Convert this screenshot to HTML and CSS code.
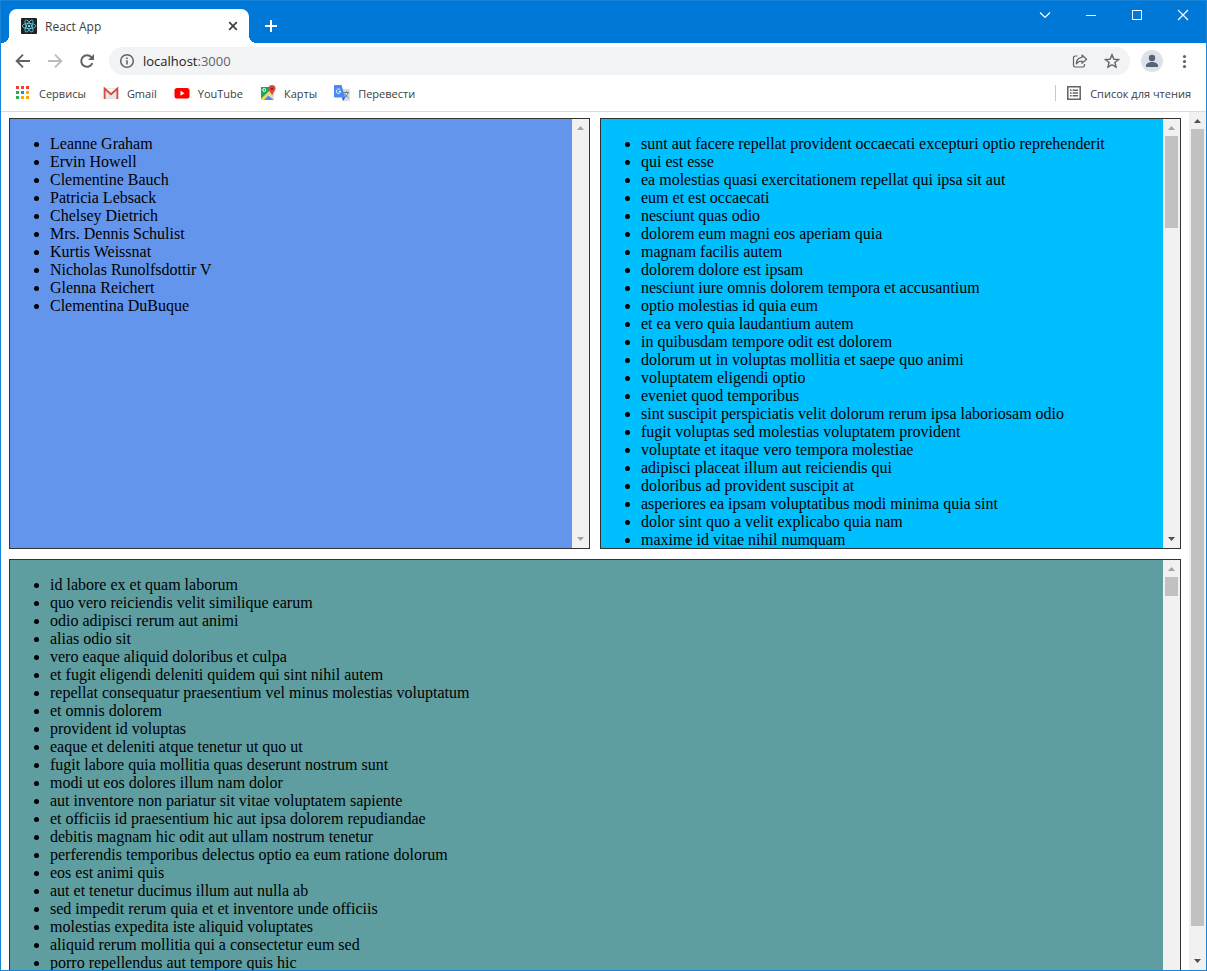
FILE: index.html
```html
<!DOCTYPE html>
<html lang="ru">
<head>
<meta charset="utf-8">
<meta name="viewport" content="width=device-width, initial-scale=1">
<title>React App</title>
<link rel="stylesheet" href="styles.css">
</head>
<body>
<div class="window">
  <header class="titlebar">
    <div class="tab">
      <svg class="icon" width="16" height="16" viewBox="0 0 16 16" aria-hidden="true"><rect width="16" height="16" rx="1" fill="#222"/><g fill="none" stroke="#61dafb" stroke-width=".75"><ellipse cx="8" cy="8" rx="6.7" ry="2.6"/><ellipse cx="8" cy="8" rx="6.7" ry="2.6" transform="rotate(60 8 8)"/><ellipse cx="8" cy="8" rx="6.7" ry="2.6" transform="rotate(120 8 8)"/></g><circle cx="8" cy="8" r="1.3" fill="#61dafb"/></svg>
      <span class="tab-title">React App</span>
      <button class="plain tab-close" aria-label="Закрыть вкладку"><svg class="icon" width="16" height="16" viewBox="0 0 16 16"><path d="M4.2 4.2l7.6 7.6M11.8 4.2l-7.6 7.6" stroke="#3c4043" stroke-width="1.7"/></svg></button>
    </div>
    <button class="plain new-tab" aria-label="Новая вкладка"><svg class="icon" width="16" height="16" viewBox="0 0 16 16"><path d="M8 2v12M2 8h12" stroke="#fff" stroke-width="2"/></svg></button>
    <div class="window-controls">
      <button class="plain control" aria-label="Поиск вкладок"><svg class="icon" width="12" height="12" viewBox="0 0 12 12"><path d="M1 3.5l5 5 5-5" fill="none" stroke="#fff" stroke-width="1.2"/></svg></button>
      <button class="plain control" aria-label="Свернуть"><svg class="icon" width="12" height="12" viewBox="0 0 12 12"><path d="M1 6.5h10" stroke="#fff"/></svg></button>
      <button class="plain control" aria-label="Развернуть"><svg class="icon" width="12" height="12" viewBox="0 0 12 12"><path d="M1.5 1.5h9v9h-9z" fill="none" stroke="#fff"/></svg></button>
      <button class="plain control" aria-label="Закрыть"><svg class="icon" width="12" height="12" viewBox="0 0 12 12"><path d="M1 1l10 10M11 1L1 11" stroke="#fff" stroke-width="1.2"/></svg></button>
    </div>
  </header>

  <div class="toolbar">
    <button class="plain nav" aria-label="Назад"><svg class="icon" width="16" height="16" viewBox="0 0 16 16"><path d="M15 8H2M8 1.7L1.7 8 8 14.3" fill="none" stroke="#5f6368" stroke-width="1.9"/></svg></button>
    <button class="plain nav" aria-label="Вперёд" disabled><svg class="icon" width="16" height="16" viewBox="0 0 16 16"><path d="M1 8h13M8 1.7L14.3 8 8 14.3" fill="none" stroke="#babcbe" stroke-width="1.9"/></svg></button>
    <button class="plain nav" aria-label="Обновить"><svg class="icon" width="16" height="16" viewBox="0 0 16 16"><path d="M13.4 10.2A5.8 5.8 0 1 1 12.4 4.2" fill="none" stroke="#5f6368" stroke-width="2"/><path d="M15 1v6H9z" fill="#5f6368"/></svg></button>
    <div class="omnibox">
      <svg class="icon" width="16" height="16" viewBox="0 0 16 16" aria-hidden="true"><circle cx="8" cy="8" r="6.3" fill="none" stroke="#5f6368" stroke-width="1.5"/><path d="M7.2 7.2h1.6v4.2H7.2zM7.2 4.5h1.6v1.6H7.2z" fill="#5f6368"/></svg>
      <div class="address" role="textbox" tabindex="0" aria-label="Адресная строка">localhost<span class="port">:3000</span></div>
      <button class="plain nav" aria-label="Поделиться"><svg class="icon" width="16" height="16" viewBox="0 0 16 16"><g fill="none" stroke="#5f6368" stroke-width="1.2" stroke-linejoin="round"><path d="M5.5 3H3.2a1.7 1.7 0 0 0-1.7 1.7v7.6A1.7 1.7 0 0 0 3.2 14h7.6a1.7 1.7 0 0 0 1.7-1.7V11"/><path d="M10 2l4.6 4.2L10 10.3V8C7.3 8 5.7 8.8 4.3 10.8 4.5 7.5 6.3 4.800 10 4.4z"/></g></svg></button>
      <button class="plain nav" aria-label="Добавить в закладки"><svg class="icon" width="16" height="16" viewBox="0 0 16 16"><path d="M8 1.8l1.8 4.300 4.700.4-3.600 3 1.100 4.600L8 11.700l-4 2.400 1.100-4.600-3.600-3 4.700-.4z" fill="none" stroke="#5f6368" stroke-width="1.4"/></svg></button>
    </div>
    <button class="plain profile" aria-label="Профиль"><svg class="icon" width="22" height="22" viewBox="0 0 22 22"><circle cx="11" cy="11" r="11" fill="#dee1e6"/><circle cx="11" cy="8" r="3.2" fill="#56627a"/><path d="M5 17v-1.5c0-2.300 3.500-3.500 6-3.500s6 1.200 6 3.500V17z" fill="#56627a"/></svg></button>
    <button class="plain menu" aria-label="Меню"><svg class="icon" width="16" height="16" viewBox="0 0 16 16"><g fill="#5f6368"><circle cx="8.5" cy="3.5" r="1.6"/><circle cx="8.5" cy="8.5" r="1.6"/><circle cx="8.5" cy="13.5" r="1.6"/></g></svg></button>
  </div>

  <nav class="bookmarks">
    <a class="bookmark" href="#apps"><svg class="icon" width="16" height="16" viewBox="0 0 16 16"><path d="M1 1h3v3H1zM6 1h3v3H6zM11 1h3v3h-3z" fill="#ea4335"/><path d="M1 6h3v3H1zM1 11h3v3H1z" fill="#34a853"/><path d="M6 6h3v3H6z" fill="#1a8cff"/><path d="M11 6h3v3h-3zM6 11h3v3H6zM11 11h3v3h-3z" fill="#fbab00"/></svg>Сервисы</a>
    <a class="bookmark" href="#gmail"><svg class="icon" width="16" height="16" viewBox="0 0 16 16"><path d="M1 3h14v11H1z" fill="#e6e6e6"/><path d="M3 4h10L8 9z" fill="#fafafa"/><path d="M1.600 14V3.600L8 9.200l6.400-5.600V14" fill="none" stroke="#d54b3d" stroke-width="1.8"/></svg>Gmail</a>
    <a class="bookmark" href="#youtube"><svg class="icon" width="16" height="16" viewBox="0 0 16 16"><rect x="0.500" y="3" width="15" height="10.500" rx="2.600" fill="#f00"/><path d="M6.500 5.800v5l4-2.500z" fill="#fff"/></svg>YouTube</a>
    <a class="bookmark" href="#maps"><svg class="icon" width="16" height="16" viewBox="0 0 16 16"><rect x="1" y="2" width="13" height="13" rx="1" fill="#e9e9e9"/><path d="M1 2h9v4L1 14z" fill="#1fa463"/><path d="M3 15l5-5 6 5z" fill="#4a89f3"/><path d="M1 14L10 5l2 2-8 8H2z" fill="#ffd24a"/><path d="M8 10l6 5V9z" fill="#ddd"/><circle cx="4.200" cy="5" r="1.500" fill="none" stroke="#fff"/><path d="M12 0a3.600 3.600 0 0 1 3.600 3.700c0 2.300-2.800 3.500-3.500 7.300-.8-3.800-3.700-5-3.700-7.300A3.600 3.600 0 0 1 12 0z" fill="#e14b3e"/><circle cx="12" cy="3.800" r="1.300" fill="#7b251d"/></svg>Карты</a>
    <a class="bookmark" href="#translate"><svg class="icon" width="16" height="16" viewBox="0 0 16 16"><path d="M6 4h9a1 1 0 0 1 1 1v10a1 1 0 0 1-1 1H9z" fill="#dadce0"/><path d="M9.500 7.500H15M12.300 6v1.500M14 7.500c-.5 2.500-2 4-3.500 5M10.800 8.500c.8 2 2 3.500 3.700 4.500" fill="none" stroke="#62838c" stroke-width="1"/><path d="M1 0h6.500l3.800 12.500H1a1 1 0 0 1-1-1V1a1 1 0 0 1 1-1z" fill="#4a89f3"/><path d="M8 12.500h3.300L9 16z" fill="#3050bd"/><path d="M6.300 4.900A2.200 2.200 0 1 0 6.700 6.500H4.600" fill="none" stroke="#fff" stroke-width="1"/></svg>Перевести</a>
    <button class="plain reading-list"><svg class="icon" width="16" height="16" viewBox="0 0 16 16"><path d="M1.800 1.800h12.400v12.400H1.800z" fill="none" stroke="#5f6368" stroke-width="1.500"/><path d="M4 5.200h1.600M4 8h1.600M4 10.800h1.600M6.600 5.200H12M6.600 8H12M6.600 10.800H12" stroke="#5f6368" stroke-width="1.500"/></svg>Список для чтения</button>
  </nav>

  <div class="viewport">
    <main class="board">
      <section class="panel users">
        <ul class="list">
          <li>Leanne Graham</li>
          <li>Ervin Howell</li>
          <li>Clementine Bauch</li>
          <li>Patricia Lebsack</li>
          <li>Chelsey Dietrich</li>
          <li>Mrs. Dennis Schulist</li>
          <li>Kurtis Weissnat</li>
          <li>Nicholas Runolfsdottir V</li>
          <li>Glenna Reichert</li>
          <li>Clementina DuBuque</li>
        </ul>
        <div class="scrollbar" aria-hidden="true">
          <svg class="arrow off" viewBox="0 0 17 17"><path d="M5 11h7L8.500 7z"/></svg>
          <div class="track"></div>
          <svg class="arrow off" viewBox="0 0 17 17"><path d="M5 6h7l-3.500 4z"/></svg>
        </div>
      </section>

      <section class="panel posts">
        <ul class="list">
          <li>sunt aut facere repellat provident occaecati excepturi optio reprehenderit</li>
          <li>qui est esse</li>
          <li>ea molestias quasi exercitationem repellat qui ipsa sit aut</li>
          <li>eum et est occaecati</li>
          <li>nesciunt quas odio</li>
          <li>dolorem eum magni eos aperiam quia</li>
          <li>magnam facilis autem</li>
          <li>dolorem dolore est ipsam</li>
          <li>nesciunt iure omnis dolorem tempora et accusantium</li>
          <li>optio molestias id quia eum</li>
          <li>et ea vero quia laudantium autem</li>
          <li>in quibusdam tempore odit est dolorem</li>
          <li>dolorum ut in voluptas mollitia et saepe quo animi</li>
          <li>voluptatem eligendi optio</li>
          <li>eveniet quod temporibus</li>
          <li>sint suscipit perspiciatis velit dolorum rerum ipsa laboriosam odio</li>
          <li>fugit voluptas sed molestias voluptatem provident</li>
          <li>voluptate et itaque vero tempora molestiae</li>
          <li>adipisci placeat illum aut reiciendis qui</li>
          <li>doloribus ad provident suscipit at</li>
          <li>asperiores ea ipsam voluptatibus modi minima quia sint</li>
          <li>dolor sint quo a velit explicabo quia nam</li>
          <li>maxime id vitae nihil numquam</li>
        </ul>
        <div class="scrollbar" aria-hidden="true">
          <svg class="arrow off" viewBox="0 0 17 17"><path d="M5 11h7L8.500 7z"/></svg>
          <div class="track"><div class="thumb" style="height:23.300%"></div></div>
          <svg class="arrow" viewBox="0 0 17 17"><path d="M5 6h7l-3.500 4z"/></svg>
        </div>
      </section>

      <section class="panel comments">
        <ul class="list">
          <li>id labore ex et quam laborum</li>
          <li>quo vero reiciendis velit similique earum</li>
          <li>odio adipisci rerum aut animi</li>
          <li>alias odio sit</li>
          <li>vero eaque aliquid doloribus et culpa</li>
          <li>et fugit eligendi deleniti quidem qui sint nihil autem</li>
          <li>repellat consequatur praesentium vel minus molestias voluptatum</li>
          <li>et omnis dolorem</li>
          <li>provident id voluptas</li>
          <li>eaque et deleniti atque tenetur ut quo ut</li>
          <li>fugit labore quia mollitia quas deserunt nostrum sunt</li>
          <li>modi ut eos dolores illum nam dolor</li>
          <li>aut inventore non pariatur sit vitae voluptatem sapiente</li>
          <li>et officiis id praesentium hic aut ipsa dolorem repudiandae</li>
          <li>debitis magnam hic odit aut ullam nostrum tenetur</li>
          <li>perferendis temporibus delectus optio ea eum ratione dolorum</li>
          <li>eos est animi quis</li>
          <li>aut et tenetur ducimus illum aut nulla ab</li>
          <li>sed impedit rerum quia et et inventore unde officiis</li>
          <li>molestias expedita iste aliquid voluptates</li>
          <li>aliquid rerum mollitia qui a consectetur eum sed</li>
          <li>porro repellendus aut tempore quis hic</li>
        </ul>
        <div class="scrollbar" aria-hidden="true">
          <svg class="arrow off" viewBox="0 0 17 17"><path d="M5 11h7L8.500 7z"/></svg>
          <div class="track"><div class="thumb" style="height:4.800%"></div></div>
          <svg class="arrow" viewBox="0 0 17 17"><path d="M5 6h7l-3.500 4z"/></svg>
        </div>
      </section>
    </main>
    <div class="scrollbar" aria-hidden="true">
      <svg class="arrow" viewBox="0 0 17 17"><path d="M5 11h7L8.500 7z"/></svg>
      <div class="track"><div class="thumb" style="height:96.700%"></div></div>
      <svg class="arrow" viewBox="0 0 17 17"><path d="M5 6h7l-3.500 4z"/></svg>
    </div>
  </div>
</div>
</body>
</html>
```
FILE: styles.css
```css
* {
  box-sizing: border-box;
}

body {
  margin: 0;
  background: #fff;
}

.window {
  display: flex;
  flex-direction: column;
  height: 100vh;
  overflow: hidden;
  border: 1px solid #1883d7;
  font-family: "Open Sans", "Noto Sans", sans-serif;
  font-size: 12px;
  color: #3c4043;
}

.icon {
  display: block;
  flex: none;
}

.plain {
  display: flex;
  align-items: center;
  justify-content: center;
  flex: none;
  margin: 0;
  padding: 0;
  border: 0;
  background: none;
  font: inherit;
  color: inherit;
}

/* Title bar */

.titlebar {
  display: flex;
  align-items: flex-start;
  flex: none;
  height: 42px;
  padding-left: 8px;
  background: #0078d7;
}

.tab {
  position: relative;
  display: flex;
  align-items: center;
  gap: 8px;
  width: 240px;
  height: 34px;
  margin-top: 8px;
  padding: 0 8px 0 12px;
  border-radius: 8px 8px 0 0;
  background: #fff;
}

.tab::before,
.tab::after {
  content: "";
  position: absolute;
  bottom: 0;
  width: 8px;
  height: 8px;
}

.tab::before {
  right: 100%;
  background: radial-gradient(circle at 0 0, #0078d7 8px, #fff 8px);
}

.tab::after {
  left: 100%;
  background: radial-gradient(circle at 100% 0, #0078d7 8px, #fff 8px);
}

.tab-title {
  flex: 1;
}

.new-tab {
  width: 28px;
  height: 34px;
  margin: 8px 0 0 8px;
}

.window-controls {
  display: flex;
  margin-left: auto;
}

.control {
  width: 46px;
  height: 28px;
}

/* Toolbar */

.toolbar {
  display: flex;
  align-items: center;
  flex: none;
  height: 36px;
  padding: 0 14px 0 6px;
}

.nav {
  width: 32px;
  height: 28px;
}

.omnibox {
  display: flex;
  align-items: center;
  flex: 1;
  height: 28px;
  margin: 0 11px 0 6px;
  padding: 0 2px 0 10px;
  border-radius: 14px;
  background: #f1f3f4;
}

.address {
  flex: 1;
  margin-left: 8px;
  font-size: 13px;
  color: #202124;
}

.port {
  color: #5f6368;
}

.menu {
  margin-left: 13px;
}

/* Bookmarks */

.bookmarks {
  display: flex;
  align-items: center;
  gap: 17px;
  flex: none;
  height: 33px;
  padding: 0 15px 4px 14px;
  border-bottom: 1px solid #dadce0;
  font-size: 11px;
}

.bookmark {
  display: flex;
  align-items: center;
  gap: 8px;
  color: inherit;
  text-decoration: none;
}

.reading-list {
  gap: 8px;
  margin-left: auto;
  padding-left: 10px;
  border-left: 1px solid #c8cacc;
}

/* Page */

.viewport {
  display: flex;
  flex: 1;
  min-height: 0;
}

.board {
  box-sizing: content-box;
  display: grid;
  flex: 1;
  grid-template-columns: 1fr 1fr;
  grid-template-rows: calc(50% + 2px) calc(50% + 2px);
  gap: 10px;
  height: 100%;
  min-width: 0;
  padding: 6px 8px 0;
  font-family: "Liberation Serif", "Times New Roman", serif;
  font-size: 16px;
  line-height: 18px;
  color: #000;
}

.panel {
  display: flex;
  min-width: 0;
  overflow: hidden;
  border: 1px solid #333;
}

.users {
  background: cornflowerblue;
}

.posts {
  background: deepskyblue;
}

.comments {
  grid-column: 1 / -1;
  background: cadetblue;
}

.list {
  flex: 1;
  min-width: 0;
  margin: 16px 0;
  padding-left: 40px;
}

.scrollbar {
  display: flex;
  flex-direction: column;
  flex: none;
  width: 17px;
  background: #f1f1f1;
}

.track {
  flex: 1;
  min-height: 0;
  padding: 0 2px;
}

.thumb {
  background: #c1c1c1;
}

.arrow {
  display: block;
  flex: none;
  width: 17px;
  height: 17px;
  fill: #505050;
}

.arrow.off {
  fill: #a3a3a3;
}
```
